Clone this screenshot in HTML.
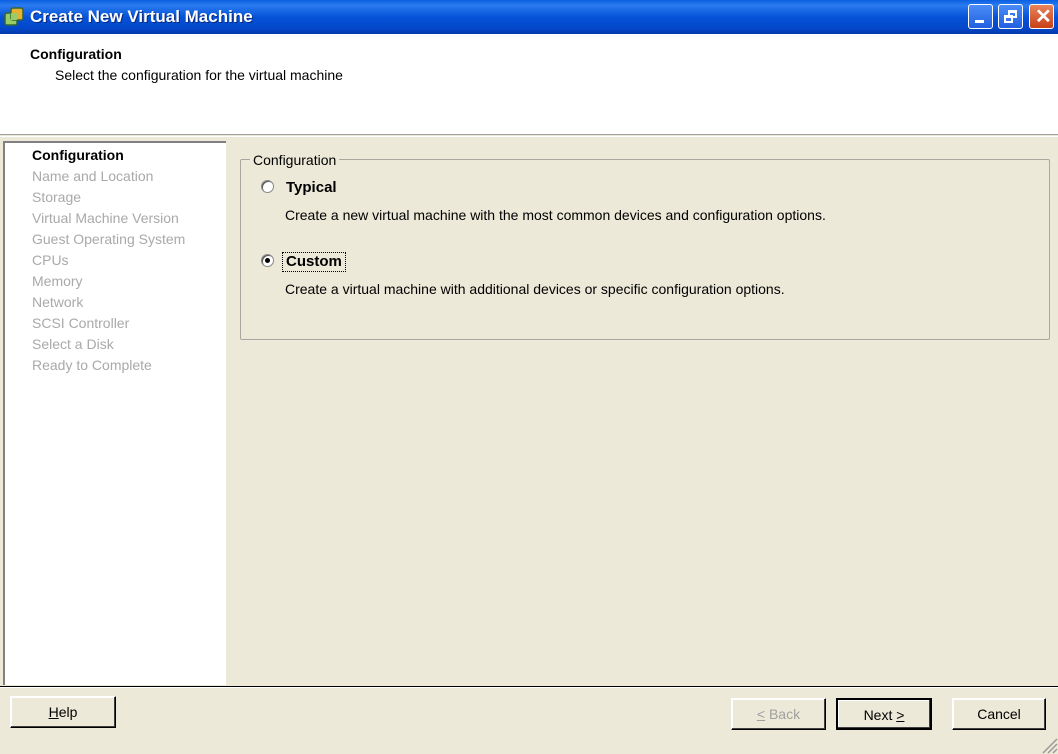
<!DOCTYPE html>
<html><head><style>
*{margin:0;padding:0;box-sizing:border-box}
body{width:1058px;height:754px;overflow:hidden;background:#ECE9D8;font-family:"Liberation Sans",sans-serif;font-size:14px;color:#000;position:relative}
.abs{position:absolute}
.title{left:0;top:0;width:1058px;height:34px;background:linear-gradient(#0A5FE0 0%,#2B7BF0 15%,#0553D8 50%,#0446C8 85%,#0338A8 100%)}
.title span{position:absolute;left:30px;top:7px;color:#fff;font-size:17px;font-weight:bold;text-shadow:1px 1px #0a2a80}
.wb{top:4px;width:25px;height:25px;border:1px solid #fff;border-radius:3px;background:linear-gradient(#4a8cf8,#2260e0)}
.header{left:0;top:34px;width:1058px;height:101px;background:#fff;border-bottom:1px solid #a0a0a0}
.left{left:3px;top:141px;width:223px;height:544px;background:#fff;border-top:2px solid #808080;border-left:2px solid #808080}
.left div{position:absolute;left:27px;color:#a9a9a9;font-size:14px}
.grp{left:240px;top:159px;width:810px;height:181px;border:1px solid #a8a8a0;border-radius:2px}
.btn{height:32px;border:1px solid #000;background:#ECE9D8;box-shadow:inset -1px -1px #404040,inset 1px 1px #fff;text-align:center;line-height:30px;font-size:14px}
.radio{width:13px;height:13px;border-radius:50%;background:#fff;border:1px solid #888;box-shadow:inset 1px 1px #555}
</style></head><body>
<div class="abs title">
<svg class="abs" style="left:4px;top:7px" width="20" height="20" viewBox="0 0 20 20"><rect x="1" y="6" width="12" height="12" rx="2" fill="#9c6" stroke="#363" stroke-width="1.5"/><rect x="7" y="1" width="12" height="12" rx="2" fill="#e8b030" stroke="#363" stroke-width="1.5"/><rect x="7" y="6" width="6" height="7" fill="#9c6"/></svg>
<span>Create New Virtual Machine</span>
<div class="abs wb" style="left:968px"><div class="abs" style="left:6px;top:15px;width:9px;height:3px;background:#fff"></div></div>
<div class="abs wb" style="left:998px"><div class="abs" style="left:9px;top:5px;width:9px;height:8px;border:2px solid #fff;border-top-width:3px"></div><div class="abs" style="left:5px;top:10px;width:9px;height:8px;border:2px solid #fff;border-top-width:3px;background:#3a78ec"></div></div>
<div class="abs wb" style="left:1029px;background:linear-gradient(#e8845a,#c84018)"><span style="position:absolute;left:5px;top:-1px;font-size:20px;color:#fff;font-weight:bold;text-shadow:none">✕</span></div>
</div>
<div class="abs header">
<div class="abs" style="left:30px;top:12px;font-weight:bold">Configuration</div>
<div class="abs" style="left:55px;top:33px">Select the configuration for the virtual machine</div>
</div>
<div class="abs" style="left:0;top:136px;width:1058px;height:1px;background:#fff"></div>
<div class="abs left">
<div style="top:4px;color:#000;font-weight:bold">Configuration</div>
<div style="top:25px">Name and Location</div>
<div style="top:46px">Storage</div>
<div style="top:67px">Virtual Machine Version</div>
<div style="top:88px">Guest Operating System</div>
<div style="top:109px">CPUs</div>
<div style="top:130px">Memory</div>
<div style="top:151px">Network</div>
<div style="top:172px">SCSI Controller</div>
<div style="top:193px">Select a Disk</div>
<div style="top:214px">Ready to Complete</div>
</div>
<div class="abs grp"></div>
<div class="abs" style="left:250px;top:152px;background:#ECE9D8;padding:0 3px">Configuration</div>
<div class="abs radio" style="left:261px;top:180px"></div>
<div class="abs" style="left:286px;top:179px;font-weight:bold;font-size:15px">Typical</div>
<div class="abs" style="left:285px;top:207px">Create a new virtual machine with the most common devices and configuration options.</div>
<div class="abs radio" style="left:261px;top:254px"><div class="abs" style="left:3px;top:3px;width:5px;height:5px;border-radius:50%;background:#000"></div></div>
<div class="abs" style="left:282px;top:252px;font-weight:bold;font-size:15px;border:1px dotted #000;padding:0 3px;height:20px">Custom</div>
<div class="abs" style="left:285px;top:281px">Create a virtual machine with additional devices or specific configuration options.</div>
<div class="abs" style="left:0;top:686px;width:1058px;height:1px;background:#000"></div>
<div class="abs" style="left:0;top:687px;width:1058px;height:1px;background:#fff"></div>
<div class="abs btn" style="left:10px;top:696px;width:106px;border-color:#fff #000 #000 #fff"><u>H</u>elp</div>
<div class="abs btn" style="left:731px;top:698px;width:95px;color:#a0a0a0;border-color:#fff #000 #000 #fff"><u>&lt;</u> Back</div>
<div class="abs btn" style="left:836px;top:698px;width:96px;border:2px solid #000">Next <u>&gt;</u></div>
<div class="abs btn" style="left:952px;top:698px;width:94px;border-color:#fff #000 #000 #fff">Cancel</div>
<svg class="abs" style="left:1040px;top:736px" width="18" height="18"><path d="M17 3L3 17M17 8L8 17M17 13L13 17" stroke="#999" stroke-width="1.5"/></svg>
</body></html>
